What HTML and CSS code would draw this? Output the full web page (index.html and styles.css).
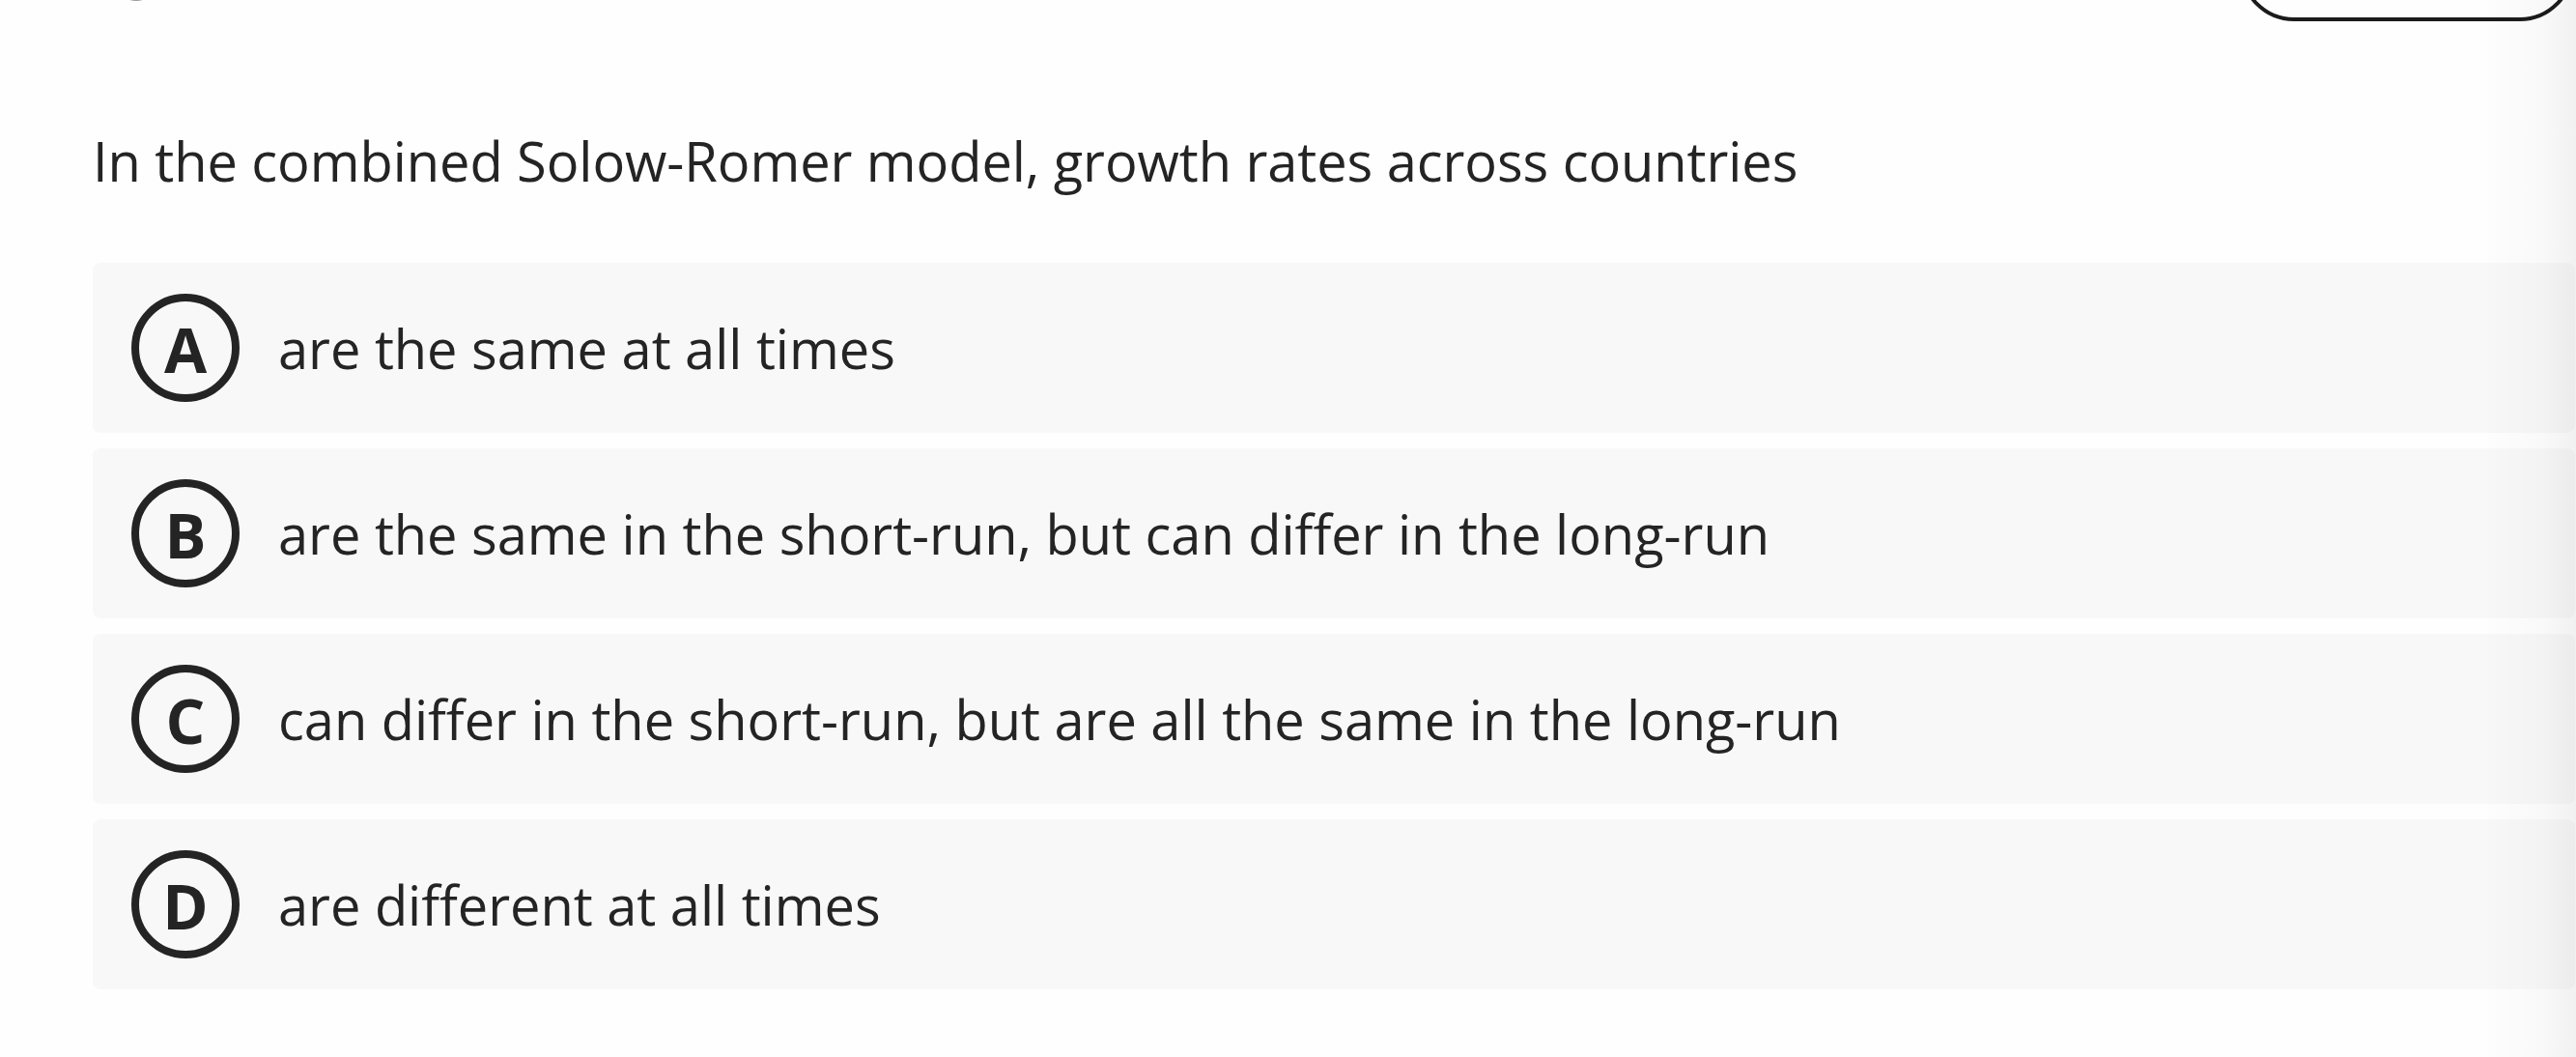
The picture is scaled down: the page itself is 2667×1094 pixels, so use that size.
FILE: index.html
```
<!DOCTYPE html>
<html lang="en">

<head>
  <meta charset="utf-8">
  <title>Question</title>
  <link rel="stylesheet" href="styles.css">
</head>

<body>
  <div class="page">
    <div class="topbar">
      <span class="mark"></span>
      <button class="pill" aria-label="Options"></button>
    </div>

    <p class="question">In the combined Solow-Romer model, growth rates across countries</p>

    <div class="answers">
      <div class="answer">
        <span class="letter">A</span>
        <span class="text">are the same at all times</span>
      </div>
      <div class="answer">
        <span class="letter">B</span>
        <span class="text">are the same in the short-run, but can differ in the long-run</span>
      </div>
      <div class="answer">
        <span class="letter">C</span>
        <span class="text">can differ in the short-run, but are all the same in the long-run</span>
      </div>
      <div class="answer">
        <span class="letter">D</span>
        <span class="text">are different at all times</span>
      </div>
    </div>
  </div>
  <div class="edge-shadow"></div>
</body>

</html>
```

FILE: styles.css
```
* {
  margin: 0;
  padding: 0;
  box-sizing: border-box;
}

body {
  height: 100vh;
  overflow: hidden;
  background-color: #fefefe;
  color: #242424;
  font-family: 'Open Sans', sans-serif;
  font-size: 56px;
}

.page {
  padding: 0 1px 0 96px;
}

/* the bar is scrolled mostly out of view */
.topbar {
  display: flex;
  justify-content: space-between;
  align-items: flex-end;
  height: 112px;
  margin-top: -90px;
}

.mark {
  width: 42px;
  height: 42px;
  margin: 0 0 21px 24px;
  border: 3px solid #999;
  border-radius: 50%;
}

.pill {
  width: 346px;
  height: 112px;
  margin-right: 1px;
  border: 4px solid #1c1a1b;
  border-radius: 56px;
  background-color: #fefefe;
}

.question {
  margin-top: 102px;
  line-height: 84px;
  letter-spacing: -0.07px;
}

.answers {
  display: flex;
  flex-direction: column;
  gap: 16px;
  margin-top: 64px;
}

.answer {
  display: flex;
  align-items: center;
  gap: 40px;
  height: 175.9px;
  padding: 0 40px;
  border-radius: 8px;
  background-color: #f8f8f8;
}

.letter {
  display: flex;
  justify-content: center;
  align-items: center;
  width: 112px;
  height: 112px;
  padding-top: 4px;
  border: 8px solid #242424;
  border-radius: 50%;
  font-size: 64px;
  font-weight: 700;
  line-height: 1;
}

.text {
  line-height: 84px;
  letter-spacing: -0.03px;
}

.edge-shadow {
  position: absolute;
  top: 0;
  right: 0;
  width: 91px;
  height: 100%;
  background: linear-gradient(to right, rgba(0, 0, 0, 0.004), rgba(0, 0, 0, 0.02) 60%, rgba(0, 0, 0, 0.05));
}
```
